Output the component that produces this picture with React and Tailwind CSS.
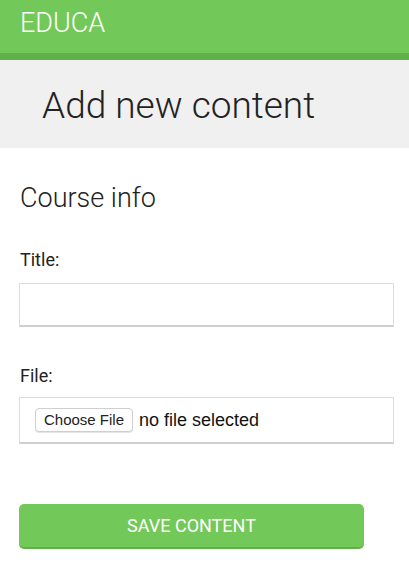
import React from 'react';

const App = () => {
  return (
    <div className="min-h-[562px] w-[409px] bg-white" style={{ fontFamily: "Roboto, 'Liberation Sans', sans-serif" }}>
      {/* Header */}
      <header className="h-[60px] bg-[#72c95a] border-b-[7px] border-[#62b04a] px-5 flex items-center">
        <span className="text-[27px] font-light text-white leading-none mt-[-6px]">EDUCA</span>
      </header>

      {/* Title band */}
      <div className="h-[88px] bg-[#f0f0f0] pl-[42px] flex items-center">
        <h1 className="text-[37px] font-light text-[#222] leading-none mt-[2px]">Add new content</h1>
      </div>

      {/* Form */}
      <form className="px-[19px] pr-[15px]" onSubmit={(e) => e.preventDefault()}>
        <h2 className="text-[27px] font-light text-[#222] leading-none mt-[37px] pl-px">Course info</h2>

        <label className="block text-[18px] text-[#222] leading-none mt-[39px] pl-px">Title:</label>
        <input
          type="text"
          className="mt-[14px] block w-full h-[44px] bg-white border border-[#dcdcdc] border-b-2 border-b-[#cfd0cc] outline-none px-2"
        />

        <label className="block text-[18px] text-[#222] leading-none mt-[40px] pl-px">File:</label>
        <div className="mt-[12px] h-[47px] border border-[#dcdcdc] border-b-2 border-b-[#cfd0cc] flex items-center pl-[15px] gap-[6px]" style={{ fontFamily: "'Liberation Sans', Arial, sans-serif" }}>
          <span className="h-[24px] w-[98px] flex items-center justify-center rounded-[4px] border border-[#cfcfcf] bg-white text-[15px] text-[#222] shadow-[0_1px_0_#e5e5e5]">
            Choose File
          </span>
          <span className="text-[18px] text-[#111]">no file selected</span>
        </div>

        <button
          type="submit"
          className="mt-[60px] w-[345px] h-[45px] rounded-[5px] bg-[#72c95a] border-b-2 border-[#62b04a] text-white text-[18px] uppercase flex items-center justify-center"
        >
          Save content
        </button>
      </form>
    </div>
  );
};

export default App;
